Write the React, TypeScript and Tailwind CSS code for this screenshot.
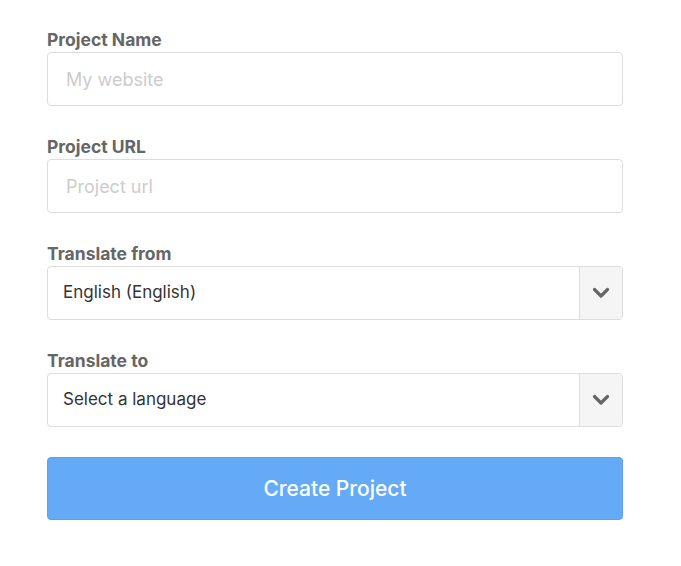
import React from 'react';

const Chevron: React.FC = () => (
  <svg width="18" height="12" viewBox="0 0 18 12" fill="none">
    <path d="M2.5 2.5 L9 9 L15.5 2.5" stroke="#666666" strokeWidth="3.2" strokeLinecap="round" strokeLinejoin="round" />
  </svg>
);

const TextField: React.FC<{ label: string; placeholder: string }> = ({ label, placeholder }) => (
  <div className="flex flex-col">
    <label className="text-[17.5px] leading-[20px] font-bold text-[#666666] mb-[2px]">{label}</label>
    <input
      placeholder={placeholder}
      className="h-[54px] w-full rounded-[4px] border border-[#dddddd] bg-white px-[18px] text-[18px] text-[#333333] placeholder:text-[#cccccc] outline-none"
    />
  </div>
);

const SelectField: React.FC<{ label: string; value: string }> = ({ label, value }) => (
  <div className="flex flex-col">
    <label className="text-[17.5px] leading-[20px] font-bold text-[#666666] mb-[2px]">{label}</label>
    <div className="flex h-[54px] w-full overflow-hidden rounded-[4px] border border-[#dddddd] bg-white">
      <div className="flex flex-1 items-center px-[15px] text-[17px] text-[#333333]">{value}</div>
      <div className="flex w-[43px] items-center justify-center border-l border-[#dddddd] bg-[#f5f5f5]">
        <Chevron />
      </div>
    </div>
  </div>
);

export default function App() {
  return (
    <div className="min-h-screen bg-white font-['Inter','Lato',sans-serif]">
      <div className="ml-[47px] w-[576px] pt-[30px] flex flex-col gap-[31px]">
        <TextField label="Project Name" placeholder="My website" />
        <TextField label="Project URL" placeholder="Project url" />
        <SelectField label="Translate from" value="English (English)" />
        <SelectField label="Translate to" value="Select a language" />
        <button className="-mt-px h-[63px] w-full rounded-[4px] border border-[#5a9ff0] bg-[#64aaf7] text-[21px] font-medium text-white">
          Create Project
        </button>
      </div>
    </div>
  );
}
